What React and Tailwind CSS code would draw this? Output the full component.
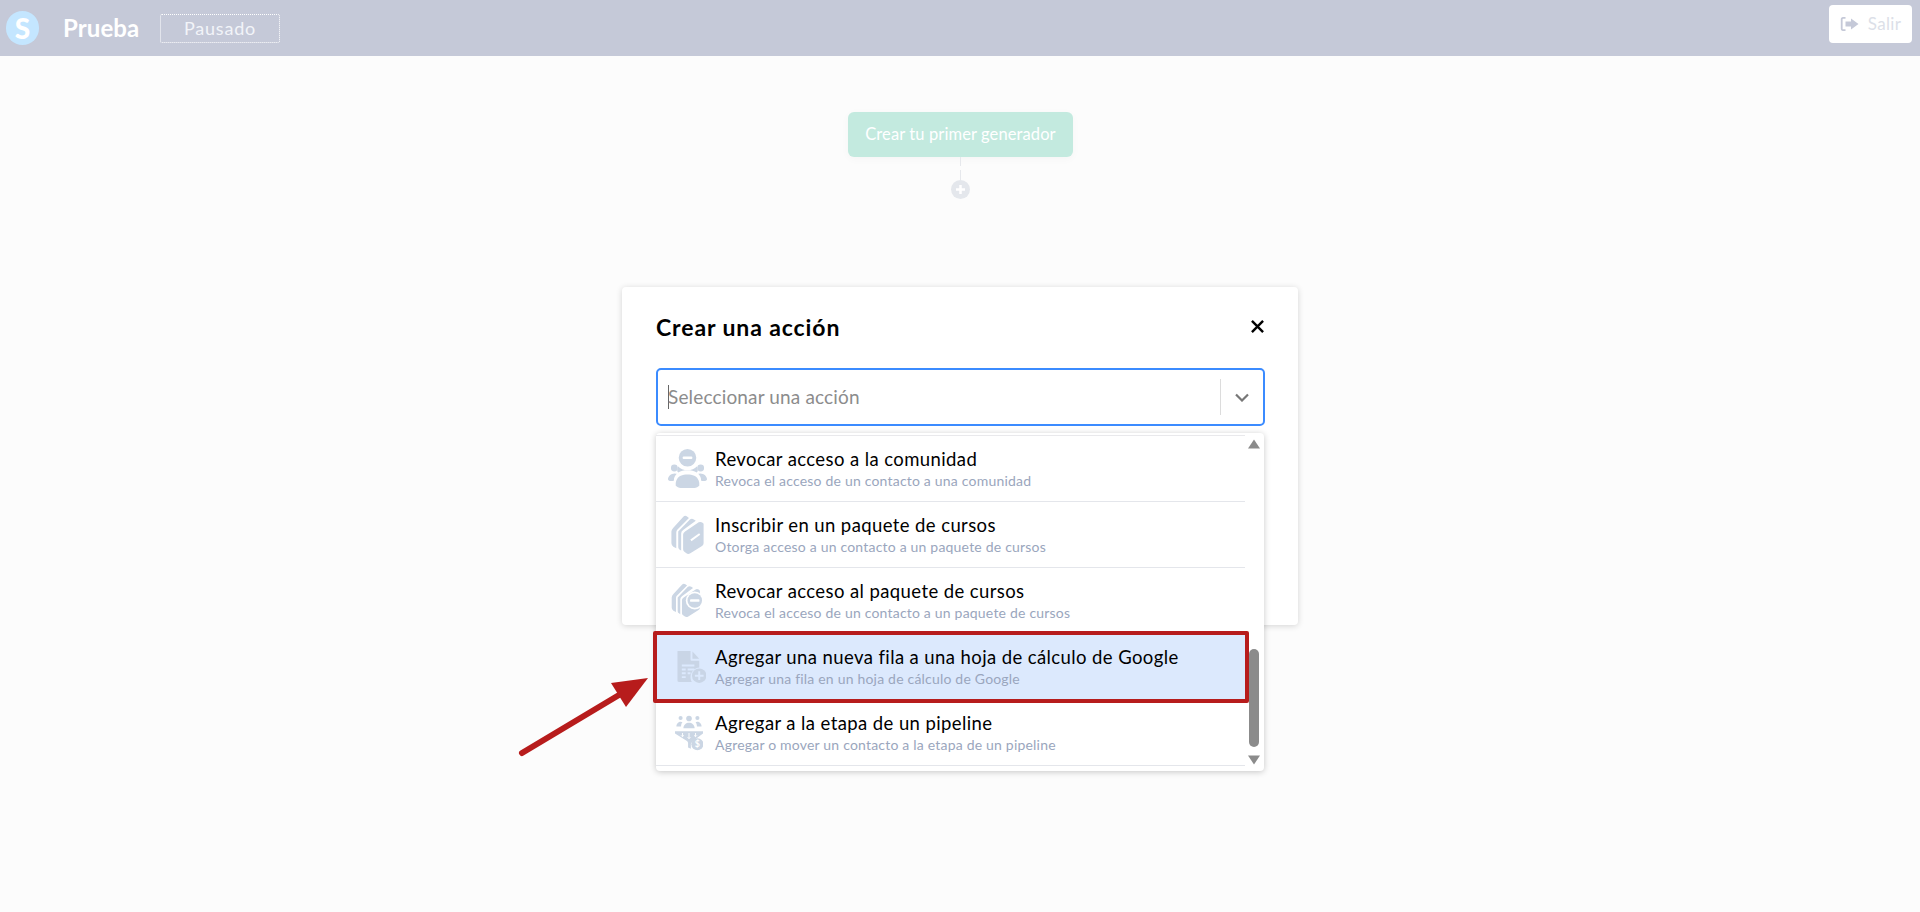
import React from "react";

const rows = [
  { t: "Revocar acceso a la comunidad", s: "Revoca el acceso de un contacto a una comunidad", icon: "group", w: "pl-[4px]" },
  { t: "Inscribir en un paquete de cursos", s: "Otorga acceso a un contacto a un paquete de cursos", icon: "books", w: "pl-[3px]" },
  { t: "Revocar acceso al paquete de cursos", s: "Revoca el acceso de un contacto a un paquete de cursos", icon: "booksMinus", w: "pl-[3px]" },
  { t: "Agregar una nueva fila a una hoja de cálculo de Google", s: "Agregar una fila en un hoja de cálculo de Google", icon: "sheet", active: true, w: "pl-[12px]" },
  { t: "Agregar a la etapa de un pipeline", s: "Agregar o mover un contacto a la etapa de un pipeline", icon: "funnel", w: "pl-[7px]" },
];

function Books({ c }) {
  return (
    <g fill={c}>
      <path d="M0 17Q0 15 2 13L12 2Q14 0 16 1.500L18 3 6 15Q5 16 5 18V34L2 32.500Q0 31 0 29Z" />
      <path d="M7 17 19 4.500Q21 3 23 4.500L25 6 12 15.500Q10 17 10 19V36.500L8.500 35.500Q7 34.500 7 33Z" />
      <path d="M12 20Q12 18.500 14 17L28 7.500Q30 6.500 32 8L33 9V29Q33 31 31 32L19 39.500Q17 40.500 15 39L13 37.500Q12 36.500 12 35Z" />
      <path d="M20 26 29 19.500" stroke="#fff" strokeWidth="2" />
    </g>
  );
}

function RowIcon({ name }) {
  const c = "#cbd6e4";
  if (name === "group")
    return (
      <svg width="39" height="39" viewBox="0 0 40 40" fill={c}>
        <circle cx="20" cy="9" r="9" />
        <rect x="15" y="7.800" width="10" height="2.400" rx="1" fill="#fff" />
        <path d="M10.500 18c2 2.500 5.500 3.800 9.500 3.800s7.500-1.300 9.500-3.800c1 1.500 1 3 1 4 0 1-.5 1.500-1 2-2.500-1.500-6-2.500-9.500-2.500s-7 1-9.500 2.500c-.5-.5-1-1-1-2 0-1 0-2.500 1-4z" />
        <circle cx="6.500" cy="19.500" r="3.500" />
        <circle cx="33.500" cy="19.500" r="3.500" />
        <path d="M8 37.500c-.5-4 1-8 5-10 4-1.800 10-1.800 14 0 4 2 5.500 6 5 10-1 1.500-3 2.500-5 2.500H13c-2 0-4-1-5-2.500z" />
        <path d="M0 31c0-3 3-6 7-6 1 0 1.500.2 2 .5-1.500 1.500-3 3.500-3 7-3 .5-6 .5-6-1.500zM40 31c0-3-3-6-7-6-1 0-1.500.2-2 .5 1.500 1.500 3 3.500 3 7 3 .5 6 .5 6-1.500z" />
      </svg>
    );
  if (name === "books")
    return (
      <svg width="33" height="40" viewBox="0 0 33 41"><Books c={c} /></svg>
    );
  if (name === "booksMinus")
    return (
      <svg width="37" height="35" viewBox="0 0 37 41">
        <Books c={c} />
        <circle cx="27" cy="20.500" r="10.500" fill="#fff" />
        <circle cx="27" cy="20.500" r="8.500" fill={c} />
        <rect x="21.500" y="19" width="11" height="3" rx="1" fill="#fff" />
      </svg>
    );
  if (name === "sheet")
    return (
      <svg width="29" height="32" viewBox="0 0 30 33" fill="#c9d5e6">
        <path d="M1 0h13v9c0 .6.400 1 1 1h8v7c-5 .5-9 4.500-9 10 0 2 .5 3.500 1.300 5H2c-1 0-1.500-.5-1.500-1.500V1C.5.500.500 0 1 0z" />
        <path d="M16 .5 23 8h-7z" />
        <path fill="#dce9fd" d="M5 14h13v2H5zM5 18h4v2H5zm6 0h7v2h-7zM5 22h4v2H5zm6 0h3v2h-3zM5 26h4v2H5z" />
        <circle cx="23" cy="25.500" r="7.500" />
        <path fill="#dce9fd" d="M22 21h2v3.500h3.500v2H24V30h-2v-3.500h-3.500v-2H22z" />
      </svg>
    );
  return (
    <svg width="28" height="36" viewBox="0 0 30 38" fill={c}>
      <circle cx="15" cy="3.500" r="3" />
      <circle cx="6" cy="3" r="2.200" />
      <circle cx="24" cy="3" r="2.200" />
      <path d="M9 14c0-4 3-6 6-6s6 2 6 6z" />
      <path d="M1.500 12c0-3 2.500-5 4.500-5 1 0 1.500.2 2 .5-1 1-1.500 2.500-1.500 4.500zM28.500 12c0-3-2.500-5-4.500-5-1 0-1.500.2-2 .5 1 1 1.500 2.500 1.500 4.500z" />
      <path d="M0 17h30v2.500L20 27c-1.500 1-2 2-3 3.500V36l-3-1.500V30c0-1.500-1-2.500-2-3L0 19.500z" />
      <path stroke="#fff" strokeWidth="1" fill="none" d="M8 19v4m-1.500-1.500L8 23l1.500-1.500M15 19v6m-1.500-1.500L15 25l1.500-1.500M22 19v4m-1.500-1.500L22 23l1.500-1.500" />
      <circle cx="24" cy="31" r="6.500" />
      <text x="24" y="34.500" fontSize="9.500" fontWeight="700" textAnchor="middle" fill="#fff" fontFamily="Lato">$</text>
    </svg>
  );
}

export default function App() {
  return (
    <div className="relative h-[912px] overflow-hidden bg-[#fcfcfc] font-['Lato','Liberation_Sans',sans-serif] text-black">
      <header className="flex h-[56px] items-center bg-[#c5c9d8]">
        <div className="ml-[6px] flex h-[34px] w-[33px] items-center justify-center rounded-full bg-[#c4e6ff] text-[28px] font-black text-white">S</div>
        <div className="ml-[24px] w-[97px] text-[24px] font-bold tracking-[0.1px] text-white">Prueba</div>
        <div className="flex h-[29px] w-[120px] items-center justify-center rounded-[2px] border border-dotted border-white text-[18px] tracking-[0.8px] text-[#f2f4f8]">Pausado</div>
        <button className="ml-auto mr-[8px] mt-[-9px] flex h-[38px] w-[83px] items-center justify-center gap-[9px] rounded-[4px] bg-white text-[17px] tracking-[0.3px] text-[#dcdfe8]">
          <svg width="19" height="16" viewBox="0 0 19 16" fill="#c5c9d8">
            <path d="M5.500 1H3C1.500 1 .8 2 .8 3.200v9.600C.8 14 1.500 15 3 15h2.500v-1.700H3.200c-.4 0-.6-.2-.6-.6V3.300c0-.4.200-.6.600-.6h2.300z" />
            <path d="M11 2.500 18.500 8 11 13.500V10.500H5.500v-5H11z" />
          </svg>
          Salir
        </button>
      </header>

      <main className="flex flex-col items-center">
        <div className="ml-px mt-[56px] flex h-[45px] w-[225px] items-center justify-center rounded-[6px] bg-[#c3eadf] text-[16.500px] tracking-[0.1px] text-white shadow-[0_2px_8px_rgba(0,0,0,0.03)]">Crear tu primer generador</div>
        <div className="ml-px flex h-[23px] w-px flex-col justify-between">
          <span className="h-[9px] bg-[#e6e8ec]" />
          <span className="h-[10px] bg-[#e6e8ec]" />
        </div>
        <div className="ml-px flex h-[19px] w-[19px] items-center justify-center rounded-full bg-[#e4e7ec]">
          <svg width="11" height="11" viewBox="0 0 11 11" fill="#fff"><path d="M4.250 1h2.500v3.250H10v2.500H6.750V10h-2.500V6.750H1v-2.500h3.250z" /></svg>
        </div>

        <section className="relative mt-[88px] h-[338px] w-[676px] rounded-[4px] bg-white px-[34px] pt-[27px] shadow-[0_1px_6px_rgba(0,0,0,0.16)]">
          <div className="flex h-[26px] w-[608px] items-center justify-between">
            <h2 className="text-[23px] font-bold leading-none tracking-[0.9px]">Crear una acción</h2>
            <svg className="mt-[-2px]" width="13" height="13" viewBox="0 0 14 14" stroke="#000" strokeWidth="2.600" fill="none"><path d="M1 1l12 12M13 1 1 13" /></svg>
          </div>
          <div className="mt-[28px] flex h-[58px] w-[609px] items-center rounded-[5px] border-2 border-[#3b8bff] pl-[10px]">
            <span className="mr-[-1px] h-[24px] w-px bg-[#666]" />
            <span className="text-[19px] tracking-[0.15px] text-[#8c8c8c]">Seleccionar una acción</span>
            <span className="ml-auto h-[36px] w-px bg-[#dcdcdc]" />
            <svg className="ml-[14px] mr-[14px]" width="14" height="9" viewBox="0 0 14 9" stroke="#777" strokeWidth="2.200" fill="none"><path d="M1 1.500 7 7.500l6-6" /></svg>
          </div>

          <div className="absolute left-[34px] top-[146px] z-10 flex h-[338px] w-[608px] rounded-[4px] bg-white shadow-[0_1px_6px_rgba(0,0,0,0.22)]">
            <ul className="mt-[2px] w-[589px] border-t border-[#e9e9ec]">
              {rows.map((r) => (
                <li key={r.t} className={r.active ? "relative flex h-[66px] items-center bg-[#dce9fd]" : "flex h-[66px] items-center border-b border-[#e4e6eb]"}>
                  <div className={"flex w-[59px] shrink-0 items-center justify-center " + r.w}>
                    <RowIcon name={r.icon} />
                  </div>
                  <div className="flex flex-col">
                    <span className="text-[18.500px] leading-[24px] tracking-[0.4px]">{r.t}</span>
                    <span className="text-[14px] leading-[20px] tracking-[0.2px] text-[#9aa6bd]">{r.s}</span>
                  </div>
                  {r.active && <div className="absolute bottom-[-3px] left-[-3px] right-[-4px] top-[-3px] rounded-[2px] border-[4px] border-[#b71c1c]" />}
                </li>
              ))}
            </ul>
            <div className="relative flex-1">
              <svg className="absolute left-[3px] top-[6px]" width="12" height="10" viewBox="0 0 12 10" fill="#8b8b8b"><path d="M6 .5 12 9.500H0z" /></svg>
              <div className="absolute left-[4px] top-[216px] h-[98px] w-[10px] rounded-full bg-[#8b8b8b]" />
              <svg className="absolute left-[3px] top-[322px]" width="12" height="10" viewBox="0 0 12 10" fill="#8b8b8b"><path d="M6 9.500 12 .5H0z" /></svg>
            </div>
          </div>
        </section>
      </main>

      <svg className="absolute left-[515px] top-[670px] z-20" width="135" height="90" viewBox="0 0 135 90">
        <path d="M7 83 L104 25" stroke="#b71c1c" strokeWidth="6" strokeLinecap="round" fill="none" />
        <path d="M133 8 L96 13 L111 37 Z" fill="#b71c1c" />
      </svg>
    </div>
  );
}
